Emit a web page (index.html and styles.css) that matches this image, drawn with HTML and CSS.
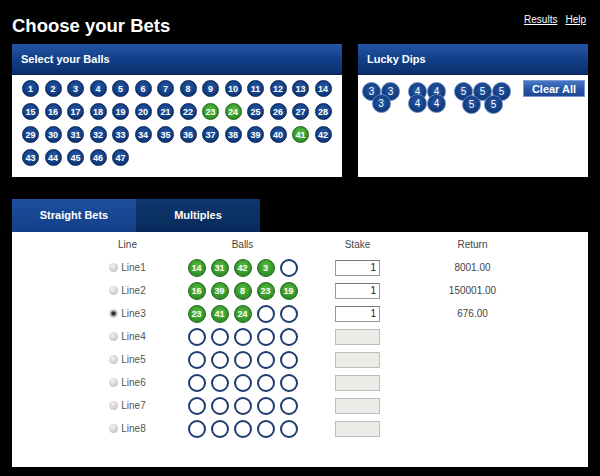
FILE: index.html
```html
<!DOCTYPE html>
<html lang="en">
<head>
    <meta charset="UTF-8">
    <meta name="viewport" content="width=device-width, initial-scale=1.0">
    <title>Choose your Bets</title>
    <link rel="stylesheet" href="styles.css">
</head>
<body>
    <!-- Page title and links -->
    <div class="top">
        <h1>Choose your Bets</h1>
        <div class="links"><a href="#">Results</a><a href="#">Help</a></div>
    </div>

    <div class="panels">
        <!-- Ball picker -->
        <div class="panel select-panel">
            <div class="panel-head">Select your Balls</div>
            <div class="ball-grid">
                <span class="ball">1</span><span class="ball">2</span><span class="ball">3</span><span class="ball">4</span><span class="ball">5</span><span class="ball">6</span><span class="ball">7</span>
                <span class="ball">8</span><span class="ball">9</span><span class="ball">10</span><span class="ball">11</span><span class="ball">12</span><span class="ball">13</span><span class="ball">14</span>
                <span class="ball">15</span><span class="ball">16</span><span class="ball">17</span><span class="ball">18</span><span class="ball">19</span><span class="ball">20</span><span class="ball">21</span>
                <span class="ball">22</span><span class="ball green">23</span><span class="ball green">24</span><span class="ball">25</span><span class="ball">26</span><span class="ball">27</span><span class="ball">28</span>
                <span class="ball">29</span><span class="ball">30</span><span class="ball">31</span><span class="ball">32</span><span class="ball">33</span><span class="ball">34</span><span class="ball">35</span>
                <span class="ball">36</span><span class="ball">37</span><span class="ball">38</span><span class="ball">39</span><span class="ball">40</span><span class="ball green">41</span><span class="ball">42</span>
                <span class="ball">43</span><span class="ball">44</span><span class="ball">45</span><span class="ball">46</span><span class="ball">47</span>
            </div>
        </div>

        <!-- Lucky dips -->
        <div class="panel dips-panel">
            <div class="panel-head">Lucky Dips</div>
            <div class="dips-body">
                <div class="dip dip3">
                    <div class="dip-row"><span class="dball">3</span><span class="dball">3</span></div>
                    <div class="dip-row"><span class="dball">3</span></div>
                </div>
                <div class="dip dip4">
                    <div class="dip-row"><span class="dball">4</span><span class="dball">4</span></div>
                    <div class="dip-row"><span class="dball">4</span><span class="dball">4</span></div>
                </div>
                <div class="dip dip5">
                    <div class="dip-row"><span class="dball">5</span><span class="dball">5</span><span class="dball">5</span></div>
                    <div class="dip-row"><span class="dball">5</span><span class="dball">5</span></div>
                </div>
                <button class="clear-btn">Clear All</button>
            </div>
        </div>
    </div>

    <!-- Bet type tabs -->
    <div class="tabs">
        <div class="tab active">Straight Bets</div>
        <div class="tab">Multiples</div>
    </div>

    <!-- Lines -->
    <div class="bets">
        <div class="bet-grid">
            <div class="col-head">Line</div>
            <div class="col-head">Balls</div>
            <div class="col-head">Stake</div>
            <div class="col-head">Return</div>

            <label class="line"><input type="radio" name="line">Line1</label>
            <div class="picks"><span class="pick">14</span><span class="pick">31</span><span class="pick">42</span><span class="pick">3</span><span class="pick empty"></span></div>
            <input class="stake" type="text" value="1">
            <div class="ret">8001.00</div>

            <label class="line"><input type="radio" name="line">Line2</label>
            <div class="picks"><span class="pick">16</span><span class="pick">39</span><span class="pick">8</span><span class="pick">23</span><span class="pick">19</span></div>
            <input class="stake" type="text" value="1">
            <div class="ret">150001.00</div>

            <label class="line"><input type="radio" name="line" checked>Line3</label>
            <div class="picks"><span class="pick">23</span><span class="pick">41</span><span class="pick">24</span><span class="pick empty"></span><span class="pick empty"></span></div>
            <input class="stake" type="text" value="1">
            <div class="ret">676.00</div>

            <label class="line"><input type="radio" name="line">Line4</label>
            <div class="picks"><span class="pick empty"></span><span class="pick empty"></span><span class="pick empty"></span><span class="pick empty"></span><span class="pick empty"></span></div>
            <input class="stake" type="text" disabled>
            <div class="ret"></div>

            <label class="line"><input type="radio" name="line">Line5</label>
            <div class="picks"><span class="pick empty"></span><span class="pick empty"></span><span class="pick empty"></span><span class="pick empty"></span><span class="pick empty"></span></div>
            <input class="stake" type="text" disabled>
            <div class="ret"></div>

            <label class="line"><input type="radio" name="line">Line6</label>
            <div class="picks"><span class="pick empty"></span><span class="pick empty"></span><span class="pick empty"></span><span class="pick empty"></span><span class="pick empty"></span></div>
            <input class="stake" type="text" disabled>
            <div class="ret"></div>

            <label class="line"><input type="radio" name="line">Line7</label>
            <div class="picks"><span class="pick empty"></span><span class="pick empty"></span><span class="pick empty"></span><span class="pick empty"></span><span class="pick empty"></span></div>
            <input class="stake" type="text" disabled>
            <div class="ret"></div>

            <label class="line"><input type="radio" name="line">Line8</label>
            <div class="picks"><span class="pick empty"></span><span class="pick empty"></span><span class="pick empty"></span><span class="pick empty"></span><span class="pick empty"></span></div>
            <input class="stake" type="text" disabled>
            <div class="ret"></div>
        </div>
    </div>
</body>
</html>
```

FILE: styles.css
```css
body {
    margin: 0;
    padding: 0 12px;
    background-color: #000;
    font-family: 'Liberation Sans', Arial, sans-serif;
    color: #444;
}

.top {
    height: 44px;
    display: flex;
    justify-content: space-between;
}

h1 {
    margin: 15px 0 0;
    color: #fff;
    font-size: 18.5px;
    line-height: 22px;
}

.links {
    margin-top: 14px;
    display: flex;
    gap: 8px;
    margin-right: 2px;
}

.links a {
    color: #fff;
    font-size: 10px;
}

.panels {
    display: flex;
    gap: 16px;
    height: 133px;
}

.panel {
    background-color: #fff;
}

.select-panel {
    width: 330px;
}

.dips-panel {
    width: 230px;
}

.panel-head {
    height: 30px;
    line-height: 30px;
    padding-left: 9px;
    color: #fff;
    font-size: 11px;
    font-weight: bold;
    background: linear-gradient(#2455a6, #123e86 55%, #0b2f6c);
    border-bottom: 1px solid #0a2455;
}

.ball-grid {
    display: grid;
    grid-template-columns: repeat(14, 17px);
    column-gap: 5.5px;
    row-gap: 6px;
    padding: 5px 0 0 10px;
}

.ball, .pick, .dball {
    border-radius: 50%;
    box-sizing: border-box;
    display: flex;
    align-items: center;
    justify-content: center;
    color: #fff;
    background: radial-gradient(circle at 50% 40%, #2a5ba6, #123f85 55%, #0a2b62);
    border: 1px solid #0a2556;
}

.ball {
    width: 17px;
    height: 17px;
    font-size: 9px;
    font-weight: bold;
}

.ball.green, .pick {
    background: radial-gradient(circle at 50% 40%, #5fbf41, #34962a 60%, #22761b);
    border-color: #1f6a18;
}

.dips-body {
    display: flex;
    align-items: flex-start;
    padding: 7px 3px 0 4px;
    gap: 8px;
}

.dip-row {
    display: flex;
    justify-content: center;
}

.dball {
    width: 19px;
    height: 19px;
    font-size: 10px;
    border-color: #5d7fb8;
}

.dip3 .dip-row + .dip-row {
    margin-top: -7px;
}

.dip4 .dip-row + .dip-row {
    margin-top: -7px;
}

.dip5 .dip-row + .dip-row {
    margin-top: -6px;
    gap: 3px;
}

.clear-btn {
    margin-left: auto;
    margin-top: -2px;
    width: 62px;
    height: 17px;
    padding: 0;
    color: #fff;
    font-family: inherit;
    font-size: 11px;
    font-weight: bold;
    background: linear-gradient(#4a78c8, #2a58a8 50%, #1d4994);
    border: 1px solid #7c9bd6;
}

.tabs {
    display: flex;
    margin-top: 22px;
    height: 33px;
}

.tab {
    width: 124px;
    line-height: 33px;
    text-align: center;
    color: #fff;
    font-size: 11px;
    font-weight: bold;
    background: linear-gradient(#0f386e, #07295a);
}

.tab.active {
    background: linear-gradient(#1e4f9f, #123f86);
}

.bets {
    background-color: #fff;
    height: 235px;
    padding-top: 1px;
    box-sizing: border-box;
}

.bet-grid {
    display: grid;
    grid-template-columns: repeat(4, 115px);
    grid-auto-rows: 23px;
    align-items: center;
    justify-items: center;
    margin-left: 58px;
    font-size: 10px;
}

.line {
    display: flex;
    align-items: center;
    color: #555;
}

.line input {
    appearance: none;
    width: 9px;
    height: 9px;
    margin: 0 3px 0 0;
    border-radius: 50%;
    background: radial-gradient(circle at 40% 35%, #f4f4f4, #c8c8c8 70%, #aaa);
}

.line input:checked {
    background: radial-gradient(circle, #333 25%, #bbb 45%, #ddd 70%, #aaa);
}

.picks {
    display: flex;
    gap: 5px;
}

.pick {
    width: 18px;
    height: 18px;
    font-size: 9px;
    font-weight: bold;
}

.pick.empty {
    background: #fff;
    border: 2px solid #1f3c70;
}

.stake {
    width: 45px;
    height: 16px;
    box-sizing: border-box;
    padding: 0 3px 0 0;
    text-align: right;
    font-family: inherit;
    font-size: 10px;
    color: #222;
    border: 1px solid #999;
    border-top-color: #777;
}

.stake:disabled {
    background-color: #ebebe8;
    border-color: #bdbdbd;
}

.ret {
    color: #444;
}
```
